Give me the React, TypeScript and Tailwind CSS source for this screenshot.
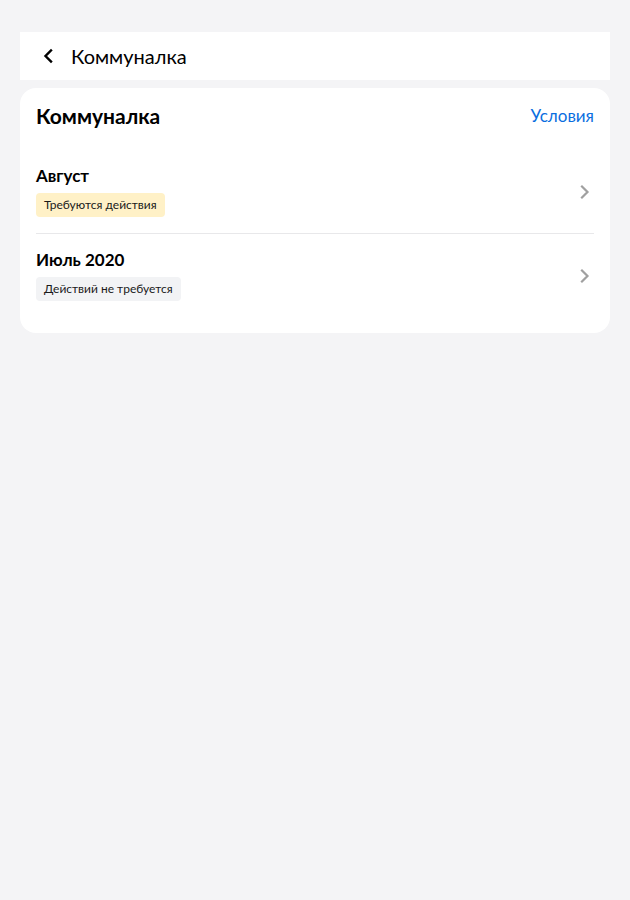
import React from "react";

function Chevron() {
  return (
    <svg width="12" height="16" viewBox="0 0 12 16" fill="none">
      <path d="M3 2.5L8.5 8L3 13.5" stroke="#a0a0a0" strokeWidth="2.2" strokeLinecap="square" />
    </svg>
  );
}

function Row({ title, badge, badgeClass, border }: { title: string; badge: string; badgeClass: string; border?: boolean }) {
  return (
    <div className={`flex items-center justify-between pt-4 pb-[16px] ${border ? "border-b border-[#e8e8ea]" : ""}`}>
      <div className="flex flex-col items-start">
        <div className="text-[17px] leading-[20px] font-bold text-black">{title}</div>
        <div className={`mt-[7px] h-[24px] px-2 rounded-[4px] flex items-center text-[12px] text-[#1a1a1a] ${badgeClass}`}>{badge}</div>
      </div>
      <div className="mr-[3px]"><Chevron /></div>
    </div>
  );
}

export default function App() {
  return (
    <div className="min-h-[900px] bg-[#f4f4f6] pt-8 px-5" style={{ fontFamily: "Lato, 'Noto Sans', sans-serif" }}>
      <div className="h-12 bg-white flex items-center pl-[22px]">
        <svg width="12" height="16" viewBox="0 0 12 16" fill="none">
          <path d="M9 2.5L3.5 8L9 13.5" stroke="#000" strokeWidth="2.4" strokeLinecap="square" />
        </svg>
        <span className="ml-[17px] text-[20px] text-black">Коммуналка</span>
      </div>
      <div className="mt-2 bg-white rounded-[16px] px-4 pt-4 pb-4">
        <div className="flex items-center justify-between h-6">
          <span className="text-[21px] font-bold text-black">Коммуналка</span>
          <span className="text-[17px] text-[#0a6ee0]">Условия</span>
        </div>
        <div className="mt-[22px]">
          <Row title="Август" badge="Требуются действия" badgeClass="bg-[#fff1c7]" border />
          <Row title="Июль 2020" badge="Действий не требуется" badgeClass="bg-[#f2f3f5]" />
        </div>
      </div>
    </div>
  );
}
